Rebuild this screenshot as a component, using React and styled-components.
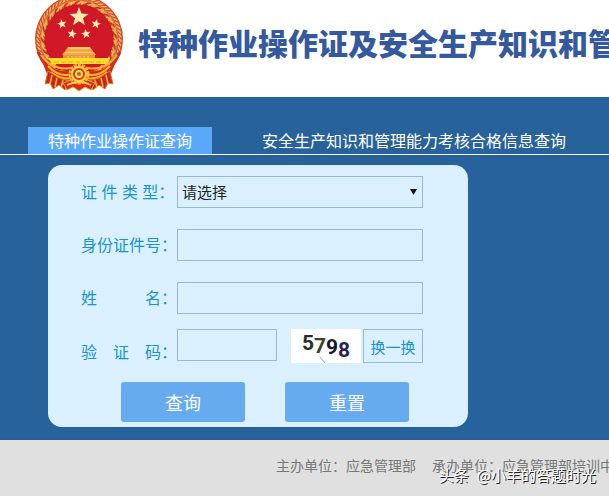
import React, { useState } from "react";
import styled, { createGlobalStyle } from "styled-components";

const GlobalStyle = createGlobalStyle`
  * { box-sizing: border-box; }
  body {
    margin: 0;
    background: #e0e0e0;
    font-family: "Liberation Sans", "Noto Sans CJK SC", sans-serif;
    font-size: 16px;
    overflow-x: hidden;
  }
  button, input, select { font-family: inherit; margin: 0; }
`;

const Page = styled.div`
  overflow: hidden;
`;

const Header = styled.header`
  display: flex;
  align-items: flex-end;
  gap: 14px;
  height: 97px;
  padding: 0 0 5px 34px;
  background: #fff;
  overflow: hidden;
`;

const EmblemSvg = styled.svg`
  flex: none;
  display: block;
`;

const Title = styled.h1`
  margin: 0 0 29px;
  color: #34599c;
  font-family: "Noto Sans CJK SC", sans-serif;
  font-size: 30px;
  font-weight: 900;
  line-height: 42px;
  white-space: nowrap;
`;

const Main = styled.main`
  padding: 30px 0 12px;
  background: #27629a;
`;

const Tabs = styled.nav`
  display: flex;
  gap: 30px;
  padding-left: 28px;
  border-bottom: 1px solid #fff;
`;

const Tab = styled.a`
  padding: 2px 20px 0;
  color: #fff;
  background: ${(p) => (p.$active ? "#5aa9f8" : "transparent")};
  line-height: 25px;
  text-decoration: none;
  white-space: nowrap;
`;

const Panel = styled.form`
  display: flex;
  flex-direction: column;
  width: 420px;
  max-width: calc(100% - 48px);
  margin: 10px 0 0 48px;
  padding: 11px 45px 5px 33px;
  border-radius: 14px;
  background: #daf0ff;
`;

const Row = styled.div`
  display: flex;
  align-items: ${(p) => p.$align || "center"};
  margin-bottom: ${(p) => p.$after || 21}px;
`;

const Label = styled.label`
  flex: none;
  width: 96px;
  padding-top: 2px;
  color: #1a93cf;
  line-height: 20px;
  white-space: pre;
  align-self: ${(p) => p.$align || "center"};
`;

const Field = styled.input`
  flex: ${(p) => (p.$short ? "0 0 100px" : "1")};
  min-width: 0;
  height: 32px;
  padding: 0 5px;
  border: 1px solid #9bb7d8;
  border-radius: 0;
  background: transparent;
  color: #222;
  font-size: 15px;
  outline: none;
`;

const SelectBox = styled.div`
  flex: 1;
  display: grid;
  align-items: center;
  & > * { grid-area: 1 / 1; }
`;

const Select = styled.select`
  width: 100%;
  height: 32px;
  padding: 0 4px;
  appearance: none;
  border: 1px solid #9bb7d8;
  border-radius: 0;
  background: transparent;
  color: #222;
  font-size: 15px;
  outline: none;
`;

const Arrow = styled.svg`
  justify-self: end;
  margin: 0 6px 0 0;
  pointer-events: none;
`;

const Captcha = styled.svg`
  flex: none;
  display: block;
  margin: 0 2px 0 14px;
  background: #fff;
`;

const Swap = styled.button`
  flex: 1;
  height: 34px;
  padding: 0;
  border: 1px solid #9bb7d8;
  background: transparent;
  color: #1a93cf;
  font-size: 15px;
  white-space: nowrap;
  cursor: pointer;
`;

const Actions = styled.div`
  display: flex;
  justify-content: space-between;
  padding: 0 14px 0 40px;
`;

const Action = styled.button`
  width: 124px;
  height: 40px;
  padding: 0;
  border: 0;
  border-radius: 3px;
  background: #66aaf0;
  color: #fff;
  font-size: 18px;
  cursor: pointer;
`;

const Footer = styled.footer`
  position: relative;
  display: flex;
  gap: 16px;
  padding: 16px 0 20px 276px;
  border-top: 1px solid #34589a;
  background: #e0e0e0;
  color: #777;
  font-size: 14px;
  line-height: 20px;
  white-space: nowrap;
`;

const Watermark = styled.span`
  position: absolute;
  right: 13px;
  bottom: 11px;
  display: flex;
  gap: 8px;
  color: #fff;
  font-family: "Noto Sans CJK SC", sans-serif;
  font-size: 15px;
  text-shadow: 1px 1px 0 #222;
`;

const starPoints = (cx, cy, r, turn = 0) =>
  Array.from({ length: 10 }, (_, i) => {
    const a = ((turn - 90 + i * 36) * Math.PI) / 180;
    const d = i % 2 ? r * 0.42 : r;
    return `${cx + d * Math.cos(a)},${cy + d * Math.sin(a)}`;
  }).join(" ");

function Emblem() {
  const grains = Array.from({ length: 50 }, (_, i) => 125 + i * 5.9);
  return (
    <EmblemSvg width="90" height="96" viewBox="0 -4 90 96" role="img" aria-label="国徽">
      <circle cx="45" cy="39" r="44" fill="#d64a2c" />
      <circle cx="45" cy="39" r="39" fill="none" stroke="#e3823a" strokeWidth="7" />
      {grains.map((a, i) => (
        <g key={a} transform={`rotate(${a} 45 39)`}>
          <ellipse cx="86" cy="39" rx="3.4" ry="1.2" fill="#f3bd62" stroke="#c9392a" strokeWidth=".7" transform="rotate(55 86 39)" />
          <path d="M78 36q5 1 4 6" fill="none" stroke={i % 3 ? "#f4b860" : "#c72a24"} strokeWidth="1.3" />
        </g>
      ))}
      <path d="M4 52q8 17 22 23M86 52q-8 17-22 23" fill="none" stroke="#cf2b21" strokeWidth="3" />
      <circle cx="45" cy="39" r="34" fill="#d01826" stroke="#b91c20" strokeWidth="1" />
      <g fill="#ffe9ae">
        <polygon points={starPoints(45, 17, 10)} />
        <polygon points={starPoints(28, 24, 5, -12)} />
        <polygon points={starPoints(62, 24, 5, 12)} />
        <polygon points={starPoints(38, 34, 5, 10)} />
        <polygon points={starPoints(52, 34, 5, -10)} />
      </g>
      <path d="M34 47h22l3 4H31zM30 52h30l2 3H28z" fill="#f4a840" />
      <path d="M34 48h22M31 52h28" stroke="#ffd772" strokeWidth="1.4" />
      <path d="M29 55h32v4H29z" fill="#ef9340" />
      <path d="M33 57h24" stroke="#ffe062" strokeWidth="1" strokeDasharray="2 2" />
      <path d="M14 58h62l-4 6H18z" fill="#ffdc2b" />
      <path d="M20 62h50" stroke="#f3a619" strokeWidth="1" strokeDasharray="5 2" />
      <path d="M6 56q11 18 34 15l-2 12q-17 3-25-9z" fill="#d5291f" />
      <path d="M84 56q-11 18-34 15l2 12q17 3 25-9z" fill="#d5291f" />
      <path d="M7 55q11 16 31 13M83 55q-11 16-31 13M14 66q11 12 25 8M17 72q9 8 21 6M76 66q-11 12-25 8M73 72q-9 8-21 6" fill="none" stroke="#f6b52a" strokeWidth="2" />
      <path d="M14 71l-3 13 5-1 3 6 6-4 6 5 4-9-10-3zM76 71l3 13-5-1-3 6-6-4-6 5-4-9 10-3z" fill="#cc241e" stroke="#dc8526" strokeWidth="1" />
      <path d="M18 75l-2 9M23 78l-2 9M29 80l-2 7M72 75l2 9M67 78l2 9M61 80l2 7" stroke="#f5bd39" strokeWidth="1.5" />
      <path d="M29 83q16-8 32 0l-4 7-6-3-6 4-6-4-6 3z" fill="#d92a20" stroke="#f0a826" strokeWidth="1" />
      <circle cx="45" cy="74" r="9" fill="#d83b1d" stroke="#f6b928" strokeWidth="3" strokeDasharray="3 1.1" />
      <circle cx="45" cy="74" r="7" fill="none" stroke="#ffd348" strokeWidth="2" />
      <circle cx="45" cy="74" r="3" fill="#e1561d" stroke="#ffe060" strokeWidth="1.8" />
      <path d="M33 85q12-6 24 0" fill="none" stroke="#ffd443" strokeWidth="1.8" />
    </EmblemSvg>
  );
}

export default function App() {
  const [type, setType] = useState("");
  return (
    <Page>
      <GlobalStyle />
      <Header>
        <Emblem />
        <Title>特种作业操作证及安全生产知识和管理</Title>
      </Header>
      <Main>
        <Tabs>
          <Tab href="#certificate" $active>特种作业操作证查询</Tab>
          <Tab href="#assessment">安全生产知识和管理能力考核合格信息查询</Tab>
        </Tabs>
        <Panel onSubmit={(e) => e.preventDefault()}>
          <Row>
            <Label htmlFor="type">证 件 类 型：</Label>
            <SelectBox>
              <Select id="type" value={type} onChange={(e) => setType(e.target.value)}>
                <option value="">请选择</option>
              </Select>
              <Arrow width="7" height="6" viewBox="0 0 7 6" aria-hidden="true">
                <path d="M0 0h7L3.5 6z" fill="#111" />
              </Arrow>
            </SelectBox>
          </Row>
          <Row>
            <Label htmlFor="number">身份证件号：</Label>
            <Field id="number" type="text" />
          </Row>
          <Row $after={15}>
            <Label htmlFor="name">姓　　　名：</Label>
            <Field id="name" type="text" />
          </Row>
          <Row $align="flex-start" $after={19}>
            <Label htmlFor="code" $align="flex-end">验　证　码：</Label>
            <Field id="code" type="text" $short />
            <Captcha width="70" height="34" viewBox="0 0 70 34" role="img" aria-label="5798">
              <g fontFamily="Roboto, sans-serif" fontSize="21" fontWeight="700">
                <text x="11" y="21" fill="#26302e">5</text>
                <text x="23" y="24" fill="#3f4225">7</text>
                <text x="35" y="25" fill="#17172f">9</text>
                <text x="47" y="28" fill="#28205d">8</text>
              </g>
              <path d="M29 28l5 6" stroke="#a9a2a6" strokeWidth="1" />
            </Captcha>
            <Swap type="button">换一换</Swap>
          </Row>
          <Actions>
            <Action type="submit">查询</Action>
            <Action type="reset" onClick={() => setType("")}>重置</Action>
          </Actions>
        </Panel>
      </Main>
      <Footer>
        <span>主办单位：应急管理部</span>
        <span>承办单位：应急管理部培训中心</span>
        <Watermark>
          <span>头条</span>
          <span>@小羊的答题时光</span>
        </Watermark>
      </Footer>
    </Page>
  );
}
